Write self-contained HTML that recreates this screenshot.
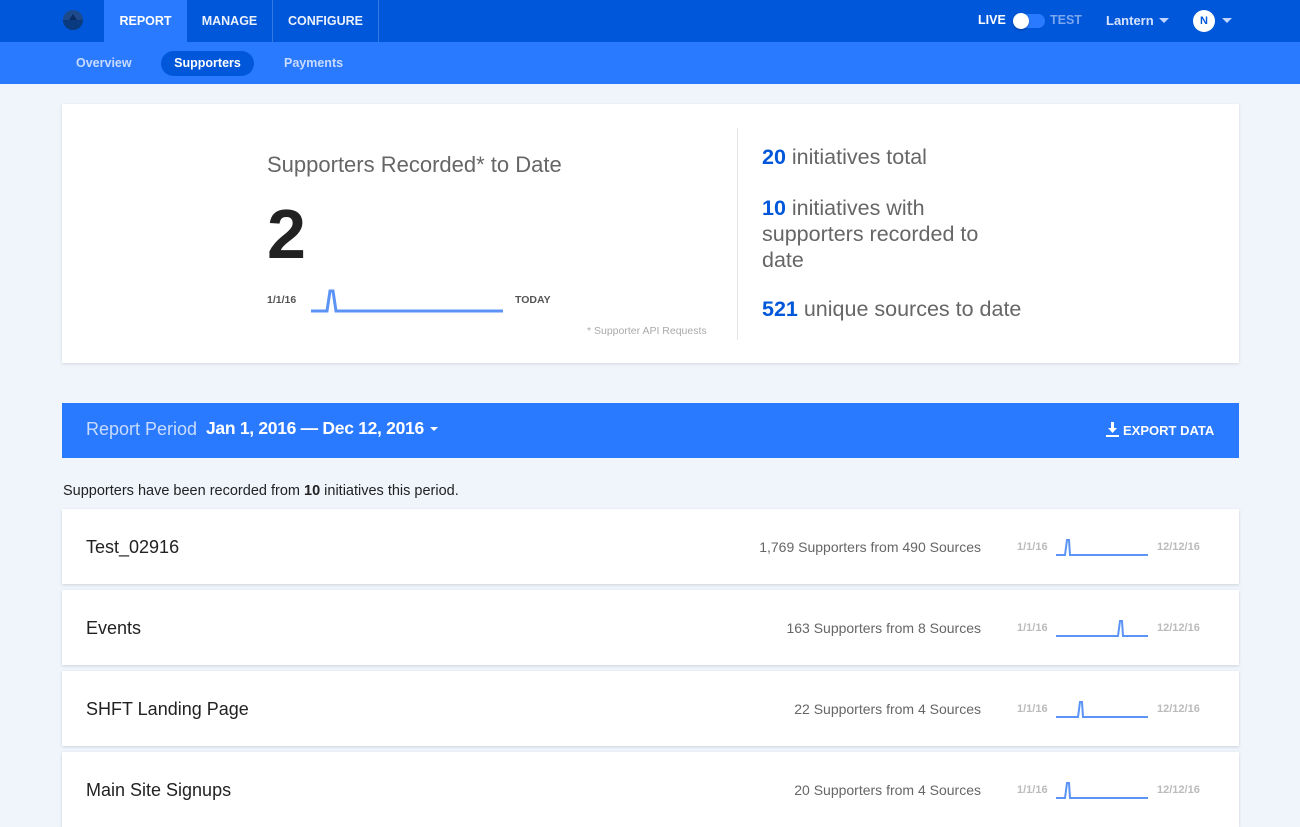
<!DOCTYPE html>
<html><head><style>
*{margin:0;padding:0;box-sizing:border-box}
body{width:1300px;height:824px;overflow:hidden;background:#f0f5fc;font-family:"Liberation Sans",sans-serif;color:#555;position:relative}
.top{position:absolute;left:0;top:0;width:1300px;height:42px;background:#0057d9}
.sub{position:absolute;left:0;top:42px;width:1300px;height:42px;background:#2a7aff}
.a{position:absolute}
.tab{position:absolute;top:0;height:42px;line-height:42px;color:#fff;font-weight:bold;font-size:12.5px;text-align:center;opacity:.92}
.card{position:absolute;background:#fff;box-shadow:0 1px 3px rgba(0,0,0,.12)}
.row{position:absolute;left:62px;width:1177px;height:75px;background:#fff;box-shadow:0 1px 3px rgba(0,0,0,.15)}
.row .t{position:absolute;left:24px;top:28px;font-size:18px;color:#222}
.row .s{position:absolute;right:258px;top:30px;font-size:14px;color:#666}
.row .d1{position:absolute;left:955px;top:32px;font-size:11px;font-weight:bold;color:#bbb}
.row .d2{position:absolute;left:1095px;top:32px;font-size:11px;font-weight:bold;color:#bbb}
.row svg{position:absolute;left:994px;top:26px}
.big{font-size:21.5px;color:#666}
.big b{color:#0057d9}
</style></head><body>
<div class="top">
 <div class="tab" style="left:104px;width:83px;background:#2a7aff;opacity:1">REPORT</div>
 <div class="tab" style="left:187px;width:86px;border-right:1px solid #3b7ee6">MANAGE</div>
 <div class="tab" style="left:273px;width:106px;border-right:1px solid #3b7ee6">CONFIGURE</div>
 <svg class="a" style="left:62px;top:9px" width="22" height="22"><circle cx="11" cy="11" r="10" fill="#1e4a8c"/><path d="M1 11a10 10 0 0 0 20 0z" fill="#0a3a80"/><path d="M11 5l4 6h-8z" fill="#0a2c63"/></svg>
 <div class="a" style="left:978px;top:13px;color:#fff;font-weight:bold;font-size:12.5px">LIVE</div>
 <div class="a" style="left:1013px;top:14px;width:32px;height:14px;border-radius:7px;background:#2a7aff"></div>
 <div class="a" style="left:1013px;top:13px;width:16px;height:16px;border-radius:8px;background:#fff;box-shadow:0 1px 2px rgba(0,0,0,.3)"></div>
 <div class="a" style="left:1050px;top:13px;color:#7aa7f0;font-weight:bold;font-size:12.5px">TEST</div>
 <div class="a" style="left:1106px;top:13px;color:#d6e4ff;font-weight:bold;font-size:13px">Lantern</div>
 <div class="a" style="left:1159px;top:18px;border:5px solid transparent;border-top:5px solid #c0d5ff"></div>
 <div class="a" style="left:1193px;top:10px;width:22px;height:22px;border-radius:11px;background:#fff;color:#0057d9;font-weight:bold;font-size:11px;text-align:center;line-height:22px">N</div>
 <div class="a" style="left:1222px;top:18px;border:5px solid transparent;border-top:5px solid #c0d5ff"></div>
</div>
<div class="sub">
 <div class="a" style="left:76px;top:14px;color:#c8dbff;font-weight:bold;font-size:12.5px">Overview</div>
 <div class="a" style="left:161px;top:9px;width:93px;height:25px;border-radius:13px;background:#0057d9;color:#fff;font-weight:bold;font-size:12.5px;text-align:center;line-height:25px">Supporters</div>
 <div class="a" style="left:284px;top:14px;color:#c8dbff;font-weight:bold;font-size:12.5px">Payments</div>
</div>
<div class="card" style="left:62px;top:104px;width:1177px;height:259px">
 <div class="a" style="left:205px;top:48px;font-size:22px;color:#666">Supporters Recorded* to Date</div>
 <div class="a" style="left:205px;top:90px;font-size:70px;font-weight:bold;color:#222">2</div>
 <div class="a" style="left:205px;top:190px;font-size:10.5px;font-weight:bold;color:#555">1/1/16</div>
 <svg class="a" style="left:249px;top:184px" width="194" height="26"><polyline points="0,23 16,23 19,3 22,3 25,23 192,23" fill="none" stroke="#5b94f5" stroke-width="3"/></svg>
 <div class="a" style="left:453px;top:190px;font-size:10.5px;font-weight:bold;color:#555">TODAY</div>
 <div class="a" style="left:525px;top:221px;font-size:10.5px;color:#aaa">* Supporter API Requests</div>
 <div class="a" style="left:675px;top:24px;width:1px;height:212px;background:#e5e5e5"></div>
 <div class="a big" style="left:700px;top:41px"><b>20</b> initiatives total</div>
 <div class="a big" style="left:700px;top:91px;width:240px;line-height:26px"><b>10</b> initiatives with supporters recorded to date</div>
 <div class="a big" style="left:700px;top:193px"><b>521</b> unique sources to date</div>
</div>
<div class="a" style="left:62px;top:403px;width:1177px;height:55px;background:#2a7aff">
 <div class="a" style="left:24px;top:16px;font-size:18px;color:#c8dbff">Report Period</div>
 <div class="a" style="left:144px;top:15px;font-size:17.5px;color:#fff;font-weight:bold;letter-spacing:-0.3px">Jan 1, 2016 — Dec 12, 2016</div>
 <div class="a" style="left:368px;top:24px;border:4px solid transparent;border-top:4px solid #fff"></div>
 <svg class="a" style="left:1044px;top:19px" width="13" height="16"><path d="M5 0h3v6h3l-4.5 5L2 6h3z" fill="#fff"/><rect x="0" y="13" width="13" height="2" fill="#fff"/></svg>
 <div class="a" style="left:1061px;top:20px;font-size:13px;color:#fff;font-weight:bold">EXPORT DATA</div>
</div>
<div class="a" style="left:63px;top:483px;font-size:14.5px;color:#222">Supporters have been recorded from <b>10</b> initiatives this period.</div>
<div class="row" style="top:509px"><div class="t">Test_02916</div><div class="s">1,769 Supporters from 490 Sources</div><div class="d1">1/1/16</div><div class="d2">12/12/16</div><svg width="94" height="22"><polyline points="0,20 9,20 11,5 13,5 14,20 92,20" fill="none" stroke="#5b94f5" stroke-width="2"/></svg></div>
<div class="row" style="top:590px"><div class="t">Events</div><div class="s">163 Supporters from 8 Sources</div><div class="d1">1/1/16</div><div class="d2">12/12/16</div><svg width="94" height="22"><polyline points="0,20 62,20 64,5 66,5 67,20 92,20" fill="none" stroke="#5b94f5" stroke-width="2"/></svg></div>
<div class="row" style="top:671px"><div class="t">SHFT Landing Page</div><div class="s">22 Supporters from 4 Sources</div><div class="d1">1/1/16</div><div class="d2">12/12/16</div><svg width="94" height="22"><polyline points="0,20 22,20 24,5 26,5 27,20 92,20" fill="none" stroke="#5b94f5" stroke-width="2"/></svg></div>
<div class="row" style="top:752px"><div class="t">Main Site Signups</div><div class="s">20 Supporters from 4 Sources</div><div class="d1">1/1/16</div><div class="d2">12/12/16</div><svg width="94" height="22"><polyline points="0,20 9,20 11,5 13,5 14,20 92,20" fill="none" stroke="#5b94f5" stroke-width="2"/></svg></div>
</body></html>
